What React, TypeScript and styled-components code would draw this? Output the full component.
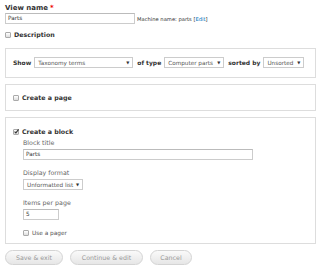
import React from 'react'
import styled, { createGlobalStyle } from 'styled-components'

const Global = createGlobalStyle`
	html, body {
		margin: 0;
		padding: 0;
		background: #fff;
	}
	body {
		font-family: 'DejaVu Sans', Verdana, sans-serif;
		font-size: 7px;
		color: #333;
	}
`

const Page = styled.div`
	width: 320px;
	box-sizing: border-box;
	padding: 4px 4px 0 5px;
`

const Label = styled.div<{ $light?: boolean }>`
	font-weight: ${(p) => (p.$light ? 'normal' : 'bold')};
	color: ${(p) => (p.$light ? '#666' : '#333')};
	font-size: ${(p) => (p.$light ? '6.3px' : '7px')};
	line-height: 9px;
	margin-bottom: ${(p) => (p.$light ? '2px' : '0')};
	white-space: nowrap;
`

const Required = styled.span`
	color: #e00;
	margin-left: 2px;
`

const Row = styled.div`
	display: flex;
	align-items: center;
	gap: 2px;
`

const TextInput = styled.div<{ $w: number }>`
	width: ${(p) => p.$w}px;
	height: 11px;
	box-sizing: border-box;
	border: 1px solid #ccc;
	border-top-color: #bbb;
	padding: 0 2px;
	font-size: 5.7px;
	line-height: 9px;
	color: #333;
	background: #fff;
	flex: none;
`

const Machine = styled.span`
	font-size: 5.2px;
	color: #333;
	white-space: nowrap;

	a {
		color: #0074bd;
		text-decoration: none;
	}
`

const Box = styled.span`
	display: inline-flex;
	align-items: center;
	justify-content: center;
	width: 4px;
	height: 4px;
	border: 1px solid #aaa;
	border-radius: 1px;
	background: linear-gradient(#fff, #ddd);
	margin-right: 3px;
	flex: none;
	overflow: visible;
`

const CheckRow = styled.label<{ $light?: boolean }>`
	display: flex;
	align-items: center;
	height: 9px;
	font-weight: ${(p) => (p.$light ? 'normal' : 'bold')};
	font-size: ${(p) => (p.$light ? '5.8px' : '6.3px')};
	color: ${(p) => (p.$light ? '#555' : '#333')};
	white-space: nowrap;
`

const Fieldset = styled.div<{ $pad: string }>`
	border: 1px solid #ddd;
	padding: ${(p) => p.$pad};
	margin-top: 6px;
`

const ShowRow = styled.div`
	display: flex;
	align-items: center;
	font-weight: bold;
	font-size: 6px;
	white-space: nowrap;
`

const Word = styled.span<{ $l: number; $r: number }>`
	margin: 0 ${(p) => p.$r}px 0 ${(p) => p.$l}px;
`

const Select = styled.div<{ $w: number }>`
	display: flex;
	align-items: center;
	justify-content: space-between;
	width: ${(p) => p.$w}px;
	height: 11px;
	box-sizing: border-box;
	border: 1px solid #ccc;
	padding: 0 3px;
	font-weight: normal;
	font-size: 5.7px;
	color: #555;
	background: #fff;
	white-space: nowrap;
	overflow: hidden;
	flex: none;

	&::after {
		content: '▼';
		font-size: 4px;
		color: #333;
		margin-left: 2px;
	}
`

const Inner = styled.div`
	padding-left: 10px;
	margin-top: 2px;
	display: flex;
	flex-direction: column;
	gap: 8px;
`

const Buttons = styled.div`
	display: flex;
	gap: 7px;
	margin-top: 6px;
`

const Button = styled.span<{ $w: number }>`
	display: inline-flex;
	align-items: center;
	justify-content: center;
	width: ${(p) => p.$w}px;
	height: 15px;
	box-sizing: border-box;
	border: 1px solid #d4d4d4;
	border-radius: 8px;
	background: linear-gradient(#fafafa, #e6e6e6);
	color: #999;
	font-size: 6.3px;
`

const Check = () => (
	<svg width="5" height="5" viewBox="0 0 5 5" style={{ overflow: 'visible' }}>
		<path d="M0.6 2.6 L1.9 3.9 L4.6 0.4" fill="none" stroke="#333" strokeWidth="1.1" />
	</svg>
)

export default function App() {
	return (
		<Page>
			<Global />
			<Label>
				View name<Required>*</Required>
			</Label>
			<Row>
				<TextInput $w={130}>Parts</TextInput>
				<Machine>
					Machine name: parts [<a href="#">Edit</a>]
				</Machine>
			</Row>
			<CheckRow style={{ marginTop: 6 }}>
				<Box />
				Description
			</CheckRow>

			<Fieldset $pad="8px 7px 9px" style={{ marginTop: 9 }}>
				<ShowRow>
					<Word $l={0} $r={3}>Show</Word>
					<Select $w={99}>Taxonomy terms</Select>
					<Word $l={4} $r={3}>of type</Word>
					<Select $w={60}>Computer parts</Select>
					<Word $l={4} $r={3}>sorted by</Word>
					<Select $w={41}>Unsorted</Select>
				</ShowRow>
			</Fieldset>

			<Fieldset $pad="8px 7px">
				<CheckRow>
					<Box />
					Create a page
				</CheckRow>
			</Fieldset>

			<Fieldset $pad="9px 7px 6px">
				<CheckRow>
					<Box>
						<Check />
					</Box>
					Create a block
				</CheckRow>
				<Inner>
					<div>
						<Label $light>Block title</Label>
						<TextInput $w={230}>Parts</TextInput>
					</div>
					<div>
						<Label $light>Display format</Label>
						<Select $w={60}>Unformatted list</Select>
					</div>
					<div>
						<Label $light>Items per page</Label>
						<TextInput $w={36}>5</TextInput>
					</div>
					<CheckRow $light>
						<Box />
						Use a pager
					</CheckRow>
				</Inner>
			</Fieldset>

			<Buttons>
				<Button $w={58}>Save &amp; exit</Button>
				<Button $w={73}>Continue &amp; edit</Button>
				<Button $w={42}>Cancel</Button>
			</Buttons>
		</Page>
	)
}
